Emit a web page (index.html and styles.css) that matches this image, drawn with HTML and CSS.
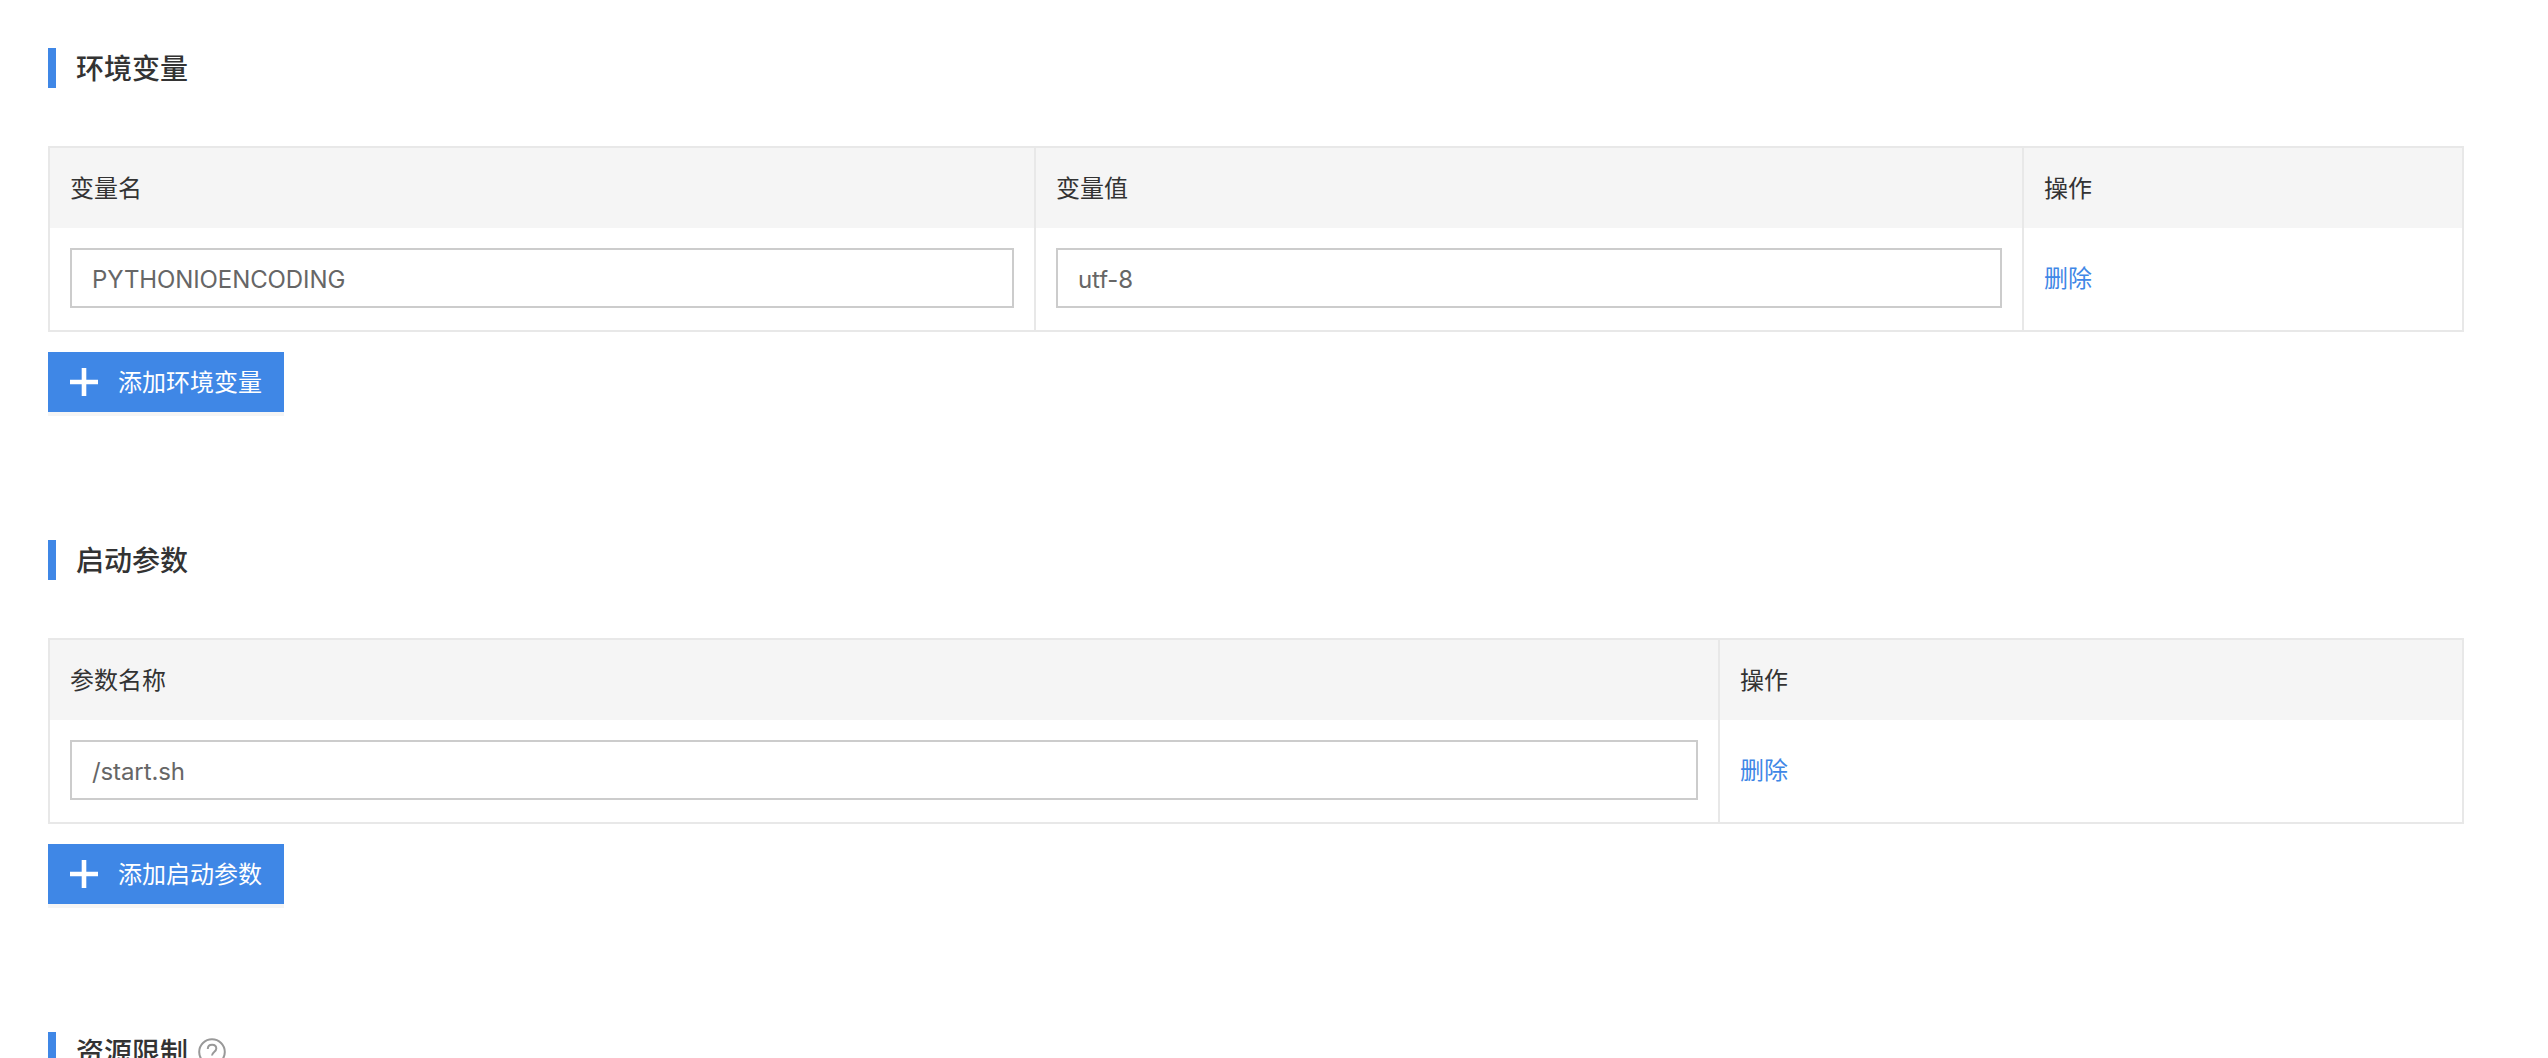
FILE: index.html
```html
<!DOCTYPE html>
<html lang="zh-CN">
<head>
<meta charset="utf-8">
<title>配置</title>
<link rel="stylesheet" href="styles.css">
</head>
<body>
<main class="page">
  <section class="section">
    <h2 class="section-title"><span>环境变量</span></h2>
    <table class="data-table">
      <colgroup><col class="col-env-name"><col class="col-env-value"><col></colgroup>
      <thead><tr><th>变量名</th><th>变量值</th><th class="last">操作</th></tr></thead>
      <tbody><tr>
        <td><input class="text-input" type="text" value="PYTHONIOENCODING"></td>
        <td><input class="text-input" type="text" value="utf-8"></td>
        <td class="last"><a class="link" href="#">删除</a></td>
      </tr></tbody>
    </table>
    <button class="add-btn" type="button">
      <svg class="plus" viewBox="0 0 28 28" aria-hidden="true"><path d="M11.7 0h4.6v11.7H28v4.6H16.300V28h-4.600V16.300H0v-4.600h11.700z"/></svg>
      <span class="btn-label">添加环境变量</span>
    </button>
  </section>
  <section class="section">
    <h2 class="section-title"><span>启动参数</span></h2>
    <table class="data-table">
      <colgroup><col class="col-arg-name"><col></colgroup>
      <thead><tr><th>参数名称</th><th class="last">操作</th></tr></thead>
      <tbody><tr>
        <td><input class="text-input" type="text" value="/start.sh"></td>
        <td class="last"><a class="link" href="#">删除</a></td>
      </tr></tbody>
    </table>
    <button class="add-btn" type="button">
      <svg class="plus" viewBox="0 0 28 28" aria-hidden="true"><path d="M11.7 0h4.6v11.7H28v4.6H16.300V28h-4.600V16.300H0v-4.600h11.700z"/></svg>
      <span class="btn-label">添加启动参数</span>
    </button>
  </section>
  <section class="section">
    <h2 class="section-title"><span>资源限制</span>
      <svg class="help" viewBox="0 0 28 28" aria-hidden="true"><circle cx="14" cy="14" r="12.8" fill="none" stroke="#999" stroke-width="2"/><path d="M9.800 11c0-2.600 1.900-4.200 4.300-4.200s4.200 1.500 4.200 3.800c0 3.400-4.300 3.600-4.300 7" fill="none" stroke="#999" stroke-width="2"/><circle cx="14" cy="21.200" r="1.300" fill="#999"/></svg>
    </h2>
  </section>
</main>
</body>
</html>
```
FILE: styles.css
```css
* { box-sizing: border-box; }
html, body { margin: 0; padding: 0; height: 1058px; overflow: hidden; background: #fff; }
body { font-family: Inter, "Noto Sans CJK SC", sans-serif; font-size: 24px; color: #333; }
.page { padding: 48px 84px 0 48px; }
.section { margin-bottom: 124px; }
.section-title {
  display: flex; align-items: center; gap: 10px;
  height: 40px; margin: 0 0 58px; padding-left: 20px;
  border-left: 8px solid #3f87e6;
  font-family: "Noto Sans CJK SC", sans-serif; font-size: 28px; font-weight: 500; line-height: 38px; color: #333;
}
.section-title span { padding-bottom: 2px; }
.help { width: 28px; height: 28px; flex: none; }
.data-table {
  width: 100%; table-layout: fixed; border-collapse: separate; border-spacing: 0;
  border: 2px solid #e8e8e8;
}
.col-env-name { width: 986px; }
.col-env-value { width: 988px; }
.col-arg-name { width: 1670px; }
th {
  height: 80px; padding: 0 20px 4px; background: #f5f5f5; text-align: left;
  font-family: "Noto Sans CJK SC", sans-serif; font-size: 24px; font-weight: 400; color: #333;
  border-right: 2px solid #e8e8e8;
}
td { height: 102px; padding: 20px 20px 22px; border-right: 2px solid #e8e8e8; font-family: "Noto Sans CJK SC", sans-serif; }
th.last, td.last { border-right: 0; }
.text-input {
  display: block; width: 100%; height: 60px; padding: 2px 20px 0;
  border: 2px solid #ccc; border-radius: 0; outline: 0; background: #fff;
  font-family: Inter, sans-serif; font-size: 24px; letter-spacing: -0.1px; color: #666;
}
.link { position: relative; top: -2px; color: #3f87e6; text-decoration: none; font-size: 24px; }
.add-btn {
  display: flex; align-items: center; gap: 20px;
  width: 236px; height: 64px; margin-top: 20px; padding: 0 0 0 22px;
  border: 0; border-bottom: 4px solid #f5f5f5; background: #3f87e6; color: #fff;
  font-family: "Noto Sans CJK SC", sans-serif; font-size: 24px;
}
.btn-label { padding-bottom: 4px; }
.plus { width: 28px; height: 28px; flex: none; fill: #fff; }
```
